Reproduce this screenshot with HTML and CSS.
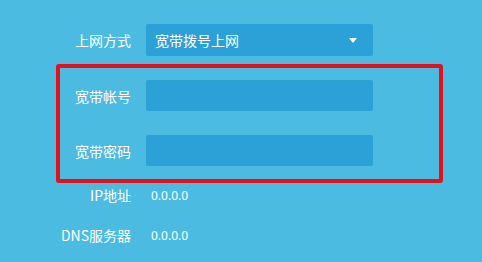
FILE: index.html
```html
<!DOCTYPE html>
<html lang="zh-CN">
  <head>
    <meta charset="UTF-8" />
    <meta name="viewport" content="width=device-width, initial-scale=1.0" />
    <title>上网设置</title>
    <link rel="stylesheet" href="styles.css">
  </head>
  <body>
    <div class="panel">
      <div class="row">
        <label class="row-label">上网方式</label>
        <div class="select">
          <span>宽带拨号上网</span>
          <span class="caret"></span>
        </div>
      </div>

      <!-- 账号密码 高亮框 -->
      <div class="highlight">
        <div class="row">
          <label class="row-label" for="account">宽带帐号</label>
          <input type="text" id="account" class="field" />
        </div>
        <div class="row">
          <label class="row-label" for="pwd">宽带密码</label>
          <input type="password" id="pwd" class="field" />
        </div>
      </div>

      <div class="row info">
        <span class="row-label">IP地址</span>
        <span class="value">0.0.0.0</span>
      </div>
      <div class="row info dns">
        <span class="row-label">DNS服务器</span>
        <span class="value">0.0.0.0</span>
      </div>
    </div>
  </body>
</html>
```

FILE: styles.css
```css
* {
  box-sizing: border-box;
}

body {
  margin: 0;
  padding: 0;
  background: #4bbbe1;
  font-family: "Noto Sans", "Noto Sans CJK SC", sans-serif;
  color: #fff;
  height: 100vh;
  overflow: hidden;
}

.panel {
  padding: 24px 0 0 60px;
  width: 443px;
}

.row {
  display: flex;
  align-items: center;
  gap: 15px;
}

.row-label {
  width: 71px;
  flex-shrink: 0;
  text-align: right;
  font-size: 14px;
  font-family: "Noto Sans CJK SC", sans-serif;
  white-space: nowrap;
}

.select {
  width: 227px;
  height: 32px;
  background: #2ba1d8;
  border-radius: 2px;
  display: flex;
  align-items: center;
  justify-content: space-between;
  padding: 0 16px 0 9px;
  font-size: 14px;
  font-family: "Noto Sans CJK SC", sans-serif;
}

.caret {
  width: 0;
  height: 0;
  border-left: 4px solid transparent;
  border-right: 4px solid transparent;
  border-top: 5px solid #fff;
}

/* 红色高亮框 */
.highlight {
  margin: 8px 0 0 -4px;
  border: 4px solid #e2111c;
  border-radius: 3px;
  padding: 12px 0 13px;
  display: flex;
  flex-direction: column;
  gap: 24px;
}

.field {
  width: 227px;
  height: 31px;
  border: none;
  border-radius: 2px;
  background: #2ba1d8;
  outline: none;
  margin: 0;
  padding: 0 9px;
  color: #fff;
  font-size: 14px;
}

.info {
  height: 24px;
  margin-top: 0;
}

.info.dns {
  margin-top: 16px;
}

.value {
  font-size: 12px;
  margin-left: 5px;
}
```
